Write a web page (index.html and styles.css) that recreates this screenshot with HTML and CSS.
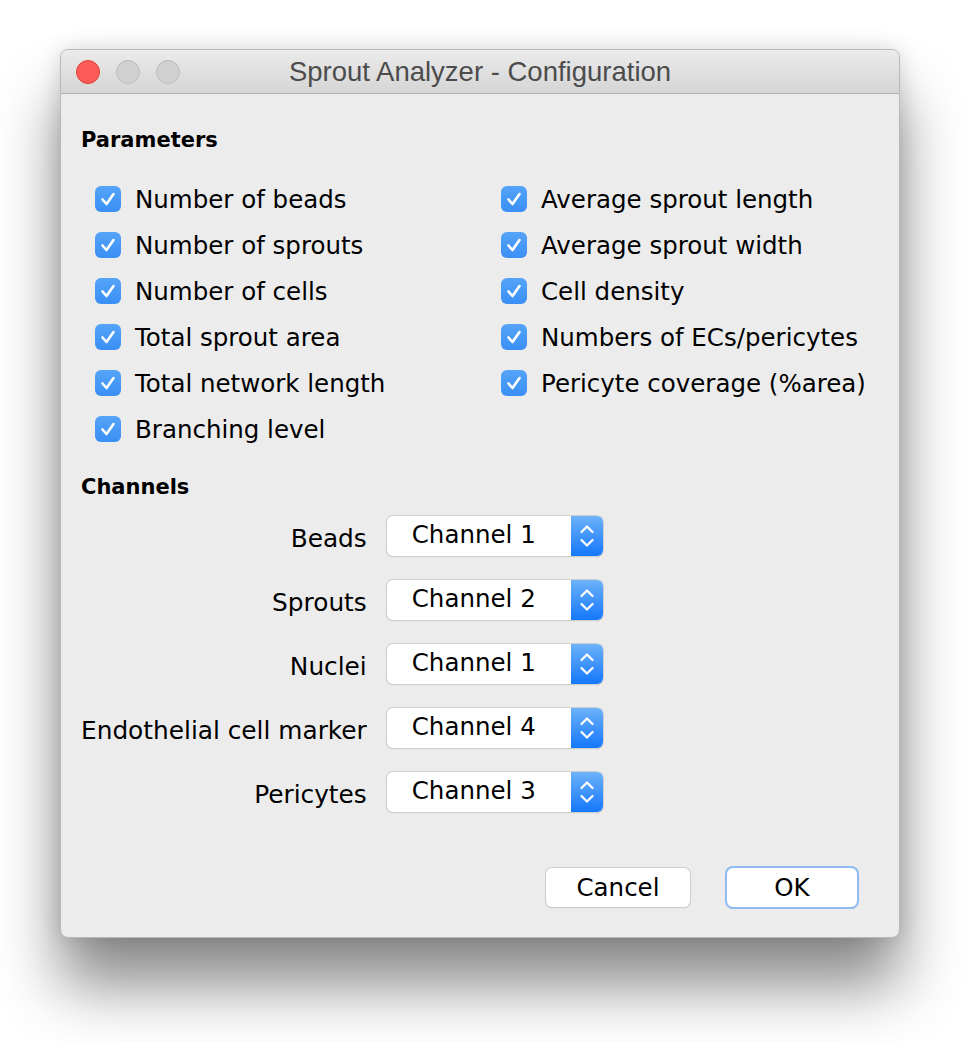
FILE: index.html
```html
<!DOCTYPE html>
<html lang="en">
  <head>
    <meta charset="UTF-8" />
    <title>Sprout Analyzer - Configuration</title>
    <link rel="stylesheet" href="styles.css">
  </head>
  <body>
    <div class="desktop">
      <div class="window">
        <div class="titlebar">
          <div class="lights">
            <span class="light close"></span>
            <span class="light"></span>
            <span class="light"></span>
          </div>
          <div class="title">Sprout Analyzer - Configuration</div>
        </div>

        <div class="content">
          <h2 class="section">Parameters</h2>
          <div class="params">
            <label class="check"><span class="box"></span>Number of beads</label>
            <label class="check"><span class="box"></span>Average sprout length</label>
            <label class="check"><span class="box"></span>Number of sprouts</label>
            <label class="check"><span class="box"></span>Average sprout width</label>
            <label class="check"><span class="box"></span>Number of cells</label>
            <label class="check"><span class="box"></span>Cell density</label>
            <label class="check"><span class="box"></span>Total sprout area</label>
            <label class="check"><span class="box"></span>Numbers of ECs/pericytes</label>
            <label class="check"><span class="box"></span>Total network length</label>
            <label class="check"><span class="box"></span>Pericyte coverage (%area)</label>
            <label class="check"><span class="box"></span>Branching level</label>
          </div>

          <h2 class="section channels-head">Channels</h2>
          <div class="channels">
            <div class="ch-label">Beads</div>
            <div class="select"><span class="value">Channel 1</span><span class="stepper"></span></div>
            <div class="ch-label">Sprouts</div>
            <div class="select"><span class="value">Channel 2</span><span class="stepper"></span></div>
            <div class="ch-label">Nuclei</div>
            <div class="select"><span class="value">Channel 1</span><span class="stepper"></span></div>
            <div class="ch-label">Endothelial cell marker</div>
            <div class="select"><span class="value">Channel 4</span><span class="stepper"></span></div>
            <div class="ch-label">Pericytes</div>
            <div class="select"><span class="value">Channel 3</span><span class="stepper"></span></div>
          </div>

          <div class="buttons">
            <button class="btn">Cancel</button>
            <button class="btn default">OK</button>
          </div>
        </div>
      </div>
    </div>

    <script>
      // checkmark and stepper glyphs are the same everywhere, fill them in once
      const tick = '<svg width="26" height="26" viewBox="0 0 26 26"><path d="M7.5 13.5 L11.5 18 L18.5 8" fill="none" stroke="#fff" stroke-width="2.6" stroke-linecap="round" stroke-linejoin="round"/></svg>'
      const arrows = '<svg width="32" height="40" viewBox="0 0 32 40"><path d="M10.5 16 L16 10.5 L21.5 16 M10.5 24 L16 29.5 L21.5 24" fill="none" stroke="#fff" stroke-width="2.2" stroke-linecap="round" stroke-linejoin="round"/></svg>'
      document.querySelectorAll(".box").forEach(function (b) {
        b.innerHTML = tick
      })
      document.querySelectorAll(".stepper").forEach(function (s) {
        s.innerHTML = arrows
      })
    </script>
  </body>
</html>
```

FILE: styles.css
```css
body {
  margin: 0;
  padding: 0;
  background: #ffffff;
  font-family: "DejaVu Sans", sans-serif;
  color: #000;
}

.desktop {
  padding: 49px 80px 0 60px;
  height: 1042px;
  box-sizing: border-box;
}

.window {
  width: 840px;
  height: 889px;
  box-sizing: border-box;
  background: #ececec;
  border: 1px solid #b9b9b9;
  border-radius: 8px;
  overflow: hidden;
  box-shadow: 0 48px 62px rgba(0, 0, 0, 0.46), 0 0 22px rgba(0, 0, 0, 0.14);
}

.titlebar {
  height: 44px;
  box-sizing: border-box;
  background: linear-gradient(#ebebeb, #d5d5d5);
  border-bottom: 1px solid #b1b1b1;
  display: flex;
  align-items: center;
  position: relative;
}

.lights {
  display: flex;
  gap: 16px;
  padding-left: 15px;
}

.light {
  width: 24px;
  height: 24px;
  border-radius: 50%;
  background: #d0d0d0;
  border: 1px solid #bcbcbc;
  box-sizing: border-box;
}

.light.close {
  background: #fc5b57;
  border-color: #df3e3a;
}

.title {
  position: absolute;
  left: 0;
  right: 0;
  text-align: center;
  font-family: "Liberation Sans", sans-serif;
  font-size: 27.5px;
  color: #4c4c4c;
}

.content {
  padding: 33px 30px 0 20px;
}

.section {
  margin: 0;
  font-size: 21px;
  font-weight: bold;
  line-height: 26px;
}

.params {
  display: grid;
  grid-template-columns: 406px 1fr;
  grid-auto-rows: 46px;
  margin: 23px 0 0 14px;
}

.check {
  display: flex;
  align-items: center;
  gap: 14px;
  font-size: 24.5px;
  white-space: nowrap;
}

.box {
  width: 26px;
  height: 26px;
  flex: none;
  border-radius: 6px;
  background: linear-gradient(#55a4f8, #3a8ff5);
  display: flex;
}

.channels-head {
  margin-top: 22px;
}

.channels {
  display: grid;
  grid-template-columns: auto 216px;
  grid-auto-rows: 40px;
  row-gap: 24px;
  column-gap: 20px;
  align-items: center;
  justify-content: start;
  margin-top: 16px;
}

.ch-label {
  text-align: right;
  font-size: 24.8px;
  padding-top: 4px;
  white-space: nowrap;
}

.select {
  height: 40px;
  box-sizing: border-box;
  display: flex;
  background: #fff;
  border-radius: 6px;
  box-shadow: 0 0 0 1px #cfcfcf, 0 1px 1px rgba(0, 0, 0, 0.25);
  overflow: hidden;
}

.value {
  flex: 1;
  padding-left: 25px;
  font-size: 24.5px;
  line-height: 38px;
}

.stepper {
  width: 32px;
  background: linear-gradient(#6cb2fb, #1577fa);
  display: flex;
}

.buttons {
  display: flex;
  justify-content: flex-end;
  gap: 37px;
  margin: 56px 12px 0 0;
}

.btn {
  width: 144px;
  height: 39px;
  font-family: "DejaVu Sans", sans-serif;
  font-size: 24.5px;
  background: #fff;
  border: none;
  border-radius: 6px;
  box-shadow: 0 0 0 1px #cdcdcd, 0 1px 1px rgba(0, 0, 0, 0.25);
  padding: 0;
}

.btn.default {
  width: 130px;
  box-shadow: 0 0 0 2px #8fbbf0, 0 1px 1px rgba(0, 0, 0, 0.25);
}
```
